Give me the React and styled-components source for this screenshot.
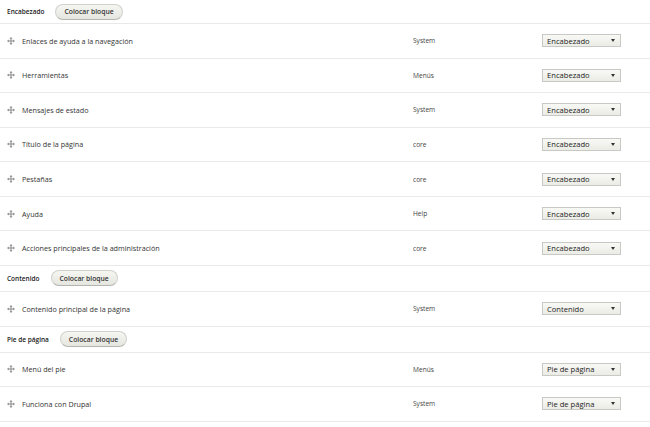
import React from "react";
import styled, { createGlobalStyle } from "styled-components";

const Global = createGlobalStyle`
  html, body { margin: 0; padding: 0; background: #fff; }
  body { font-family: "Open Sans", "DejaVu Sans", sans-serif; color: #333; }
`;

const Table = styled.div`
  width: 650px;
  display: flex;
  flex-direction: column;
`;

const RegionRow = styled.div`
  box-sizing: border-box;
  height: ${(p) => p.$h}px;
  display: flex;
  align-items: center;
  gap: 11px;
  padding-left: 7px;
  border-bottom: 1px solid #e9e9e9;
`;

const RegionTitle = styled.span`
  font-size: 6.5px;
  font-weight: 600;
  color: #222;
`;

const PlaceButton = styled.button`
  box-sizing: border-box;
  height: 16px;
  padding: 0 8px;
  border: 1px solid #d0d0cc;
  border-bottom-color: #b4b4b0;
  border-radius: 10px;
  background: linear-gradient(#f6f6f2, #e6e6e0);
  font-family: inherit;
  font-size: 6.8px;
  font-weight: 600;
  color: #333;
  cursor: pointer;
`;

const BlockRow = styled.div`
  box-sizing: border-box;
  height: 34.57px;
  display: grid;
  grid-template-columns: 406px 129px 1fr;
  align-items: center;
  padding-left: 7px;
  border-bottom: 1px solid #e9e9e9;
`;

const NameCell = styled.div`
  display: flex;
  align-items: center;
  gap: 7px;
  font-size: 7.2px;
  color: #333;
`;

const Category = styled.div`
  font-size: 6.6px;
  color: #444;
`;

const SelectBox = styled.div`
  box-sizing: border-box;
  width: 79px;
  height: 13px;
  display: flex;
  align-items: center;
  justify-content: space-between;
  padding: 0 5px 0 4px;
  border: 1px solid #c8c8c4;
  background: linear-gradient(#f8f8f5, #ecece6);
  font-size: 7.6px;
  color: #222;
`;

const Arrow = styled.span`
  width: 0;
  height: 0;
  border-left: 2.5px solid transparent;
  border-right: 2.5px solid transparent;
  border-top: 3px solid #333;
`;

const DragIcon = () => (
  <svg width="8" height="8" viewBox="0 0 16 16" fill="#8a8a8a">
    <path d="M8 0 L11 3.5 H9 V7 H12.5 V5 L16 8 L12.5 11 V9 H9 V12.5 H11 L8 16 L5 12.5 H7 V9 H3.5 V11 L0 8 L3.5 5 V7 H7 V3.5 H5 Z" />
  </svg>
);

const regions = [
  {
    title: "Encabezado",
    h: 24,
    option: "Encabezado",
    blocks: [
      ["Enlaces de ayuda a la navegación", "System"],
      ["Herramientas", "Menús"],
      ["Mensajes de estado", "System"],
      ["Título de la página", "core"],
      ["Pestañas", "core"],
      ["Ayuda", "Help"],
      ["Acciones principales de la administración", "core"],
    ],
  },
  {
    title: "Contenido",
    h: 26,
    option: "Contenido",
    blocks: [["Contenido principal de la página", "System"]],
  },
  {
    title: "Pie de página",
    h: 26,
    option: "Pie de página",
    blocks: [
      ["Menú del pie", "Menús"],
      ["Funciona con Drupal", "System"],
    ],
  },
];

export default function App() {
  return (
    <>
      <Global />
      <Table>
        {regions.map((r) => (
          <React.Fragment key={r.title}>
            <RegionRow $h={r.h}>
              <RegionTitle>{r.title}</RegionTitle>
              <PlaceButton>Colocar bloque</PlaceButton>
            </RegionRow>
            {r.blocks.map(([name, cat]) => (
              <BlockRow key={name}>
                <NameCell>
                  <DragIcon />
                  {name}
                </NameCell>
                <Category>{cat}</Category>
                <SelectBox>
                  {r.option}
                  <Arrow />
                </SelectBox>
              </BlockRow>
            ))}
          </React.Fragment>
        ))}
      </Table>
    </>
  );
}
